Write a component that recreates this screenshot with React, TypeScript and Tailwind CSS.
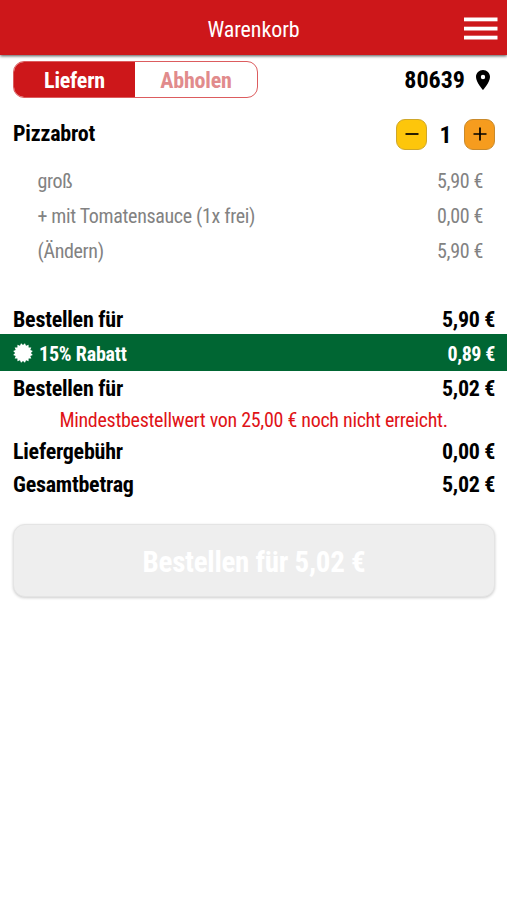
import React from 'react';

interface PositionLine {
  label: string;
  price: string;
}

const lines: PositionLine[] = [
  { label: 'groß', price: '5,90 €' },
  { label: '+ mit Tomatensauce (1x frei)', price: '0,00 €' },
  { label: '(Ändern)', price: '5,90 €' },
];

const MenuIcon = () => (
  <svg viewBox="0 0 34 24" className="w-[34px] h-6 fill-white">
    <rect x="0" y="0.5" width="33.5" height="3.8" />
    <rect x="0" y="9.7" width="33.5" height="3.8" />
    <rect x="0" y="18.7" width="33.5" height="3.8" />
  </svg>
);

const PinIcon = () => (
  <svg viewBox="5 2 14 20" className="w-[14px] h-5">
    <path d="M12 2C8.13 2 5 5.13 5 9c0 5.25 7 13 7 13s7-7.75 7-13c0-3.87-3.13-7-7-7zm0 9.2a2.2 2.2 0 0 1 0-4.4 2.2 2.2 0 0 1 0 4.4z" />
  </svg>
);

// Starburst with 16 teeth
const BadgeIcon = () => {
  const points = Array.from({ length: 32 }, (_, i) => {
    const r = i % 2 === 0 ? 10 : 7.9;
    const a = ((i + 1) * Math.PI) / 16;
    return `${(10 + r * Math.sin(a)).toFixed(2)},${(10 - r * Math.cos(a)).toFixed(2)}`;
  }).join(' ');
  return (
    <svg viewBox="0 0 20 20" className="w-5 h-5 fill-white">
      <polygon points={points} />
    </svg>
  );
};

const StepButton = ({ plus }: { plus?: boolean }) => (
  <button
    className={`w-[31px] h-[31px] rounded-[9px] border flex items-center justify-center ${
      plus ? 'bg-[#f69c1e] border-[#c98a2c]' : 'bg-[#fdc60b] border-[#cfa72a]'
    }`}
  >
    <svg viewBox="0 0 14 14" className="w-[14px] h-[14px] mb-px stroke-black" strokeWidth="1.7">
      <path d={plus ? 'M0.5 7H13.5M7 0.5V13.5' : 'M0.5 7H13.5'} />
    </svg>
  </button>
);

const TotalRow = ({ label, price, className }: { label: string; price: string; className: string }) => (
  <div
    className={`flex items-center justify-between pl-[13px] pr-3 text-[22px] tracking-[-0.23px] font-bold ${className}`}
  >
    <span>{label}</span>
    <span className="tracking-[-0.33px]">{price}</span>
  </div>
);

const App: React.FC = () => {
  return (
    <div className="w-full min-h-screen bg-white text-black leading-none whitespace-nowrap font-['Roboto_Condensed','Roboto',sans-serif] [font-stretch:75%]">
      <header className="h-[55px] bg-[#cd171a] shadow-[0_1px_3px_rgba(0,0,0,0.7)] grid grid-cols-[1fr_auto_1fr] items-center pt-[3px] px-[9px]">
        <span />
        <h1 className="pt-px text-[22px] tracking-[-0.1px] text-white">Warenkorb</h1>
        <button className="justify-self-end">
          <MenuIcon />
        </button>
      </header>

      <div className="flex items-center justify-between mt-[6px] pl-[13px] pr-[17px]">
        <div className="flex w-[245px] h-[37px] rounded-[11px] border border-[#cd171a]/70 overflow-hidden text-[22px] tracking-[-0.2px] font-bold">
          <button className="w-[121px] pt-[2px] bg-[#cd171a] text-white">Liefern</button>
          <button className="flex-1 pt-[2px] text-[#e18b8c]">Abholen</button>
        </div>
        <div className="flex items-center gap-[11px] text-[24px] font-bold">
          <span className="pt-px">80639</span>
          <PinIcon />
        </div>
      </div>

      <div className="flex items-center justify-between h-[31px] mt-[21px] pl-[13px] pr-3">
        <h2 className="pb-px text-[22px] tracking-[-0.2px] font-bold">Pizzabrot</h2>
        <div className="flex items-center">
          <StepButton />
          <span className="w-[37px] text-center text-[24px] font-bold">1</span>
          <StepButton plus />
        </div>
      </div>

      <div className="mt-[13px] text-[20px] tracking-[-0.34px] text-[#828282]">
        {lines.map((line) => (
          <div key={line.label} className="flex items-center justify-between h-[35.3px] pl-[37.5px] pr-6">
            <span>{line.label}</span>
            <span>{line.price}</span>
          </div>
        ))}
      </div>

      <TotalRow label="Bestellen für" price="5,90 €" className="h-[29px] mt-[36px] pt-px" />
      <div className="flex items-center h-[37px] pt-px pl-[13px] pr-3 bg-[#006633] text-white text-[20px] font-bold">
        <BadgeIcon />
        <span className="ml-[6px] pt-[2px] tracking-[-0.2px]">15% Rabatt</span>
        <span className="ml-auto pt-[2px] tracking-[-0.4px]">0,89 €</span>
      </div>
      <TotalRow label="Bestellen für" price="5,02 €" className="h-[35px] pt-[2px]" />
      <p className="h-[28px] flex items-center justify-center text-[20px] tracking-[-0.3px] text-[#df1317]">
        Mindestbestellwert von 25,00 € noch nicht erreicht.
      </p>
      <TotalRow label="Liefergebühr" price="0,00 €" className="h-[33px] pt-[3px]" />
      <TotalRow label="Gesamtbetrag" price="5,02 €" className="h-[33px] pt-[3px]" />

      <div className="pl-[13px] pr-3 mt-[24px]">
        <button className="w-full h-[73px] pt-[4px] rounded-[12px] bg-[#eeeeee] border border-[#e4e4e4] shadow-[0_1px_3px_rgba(0,0,0,0.2)] text-white text-[29px] tracking-[-0.25px] font-bold">
          Bestellen für 5,02 €
        </button>
      </div>
    </div>
  );
};

export default App;
